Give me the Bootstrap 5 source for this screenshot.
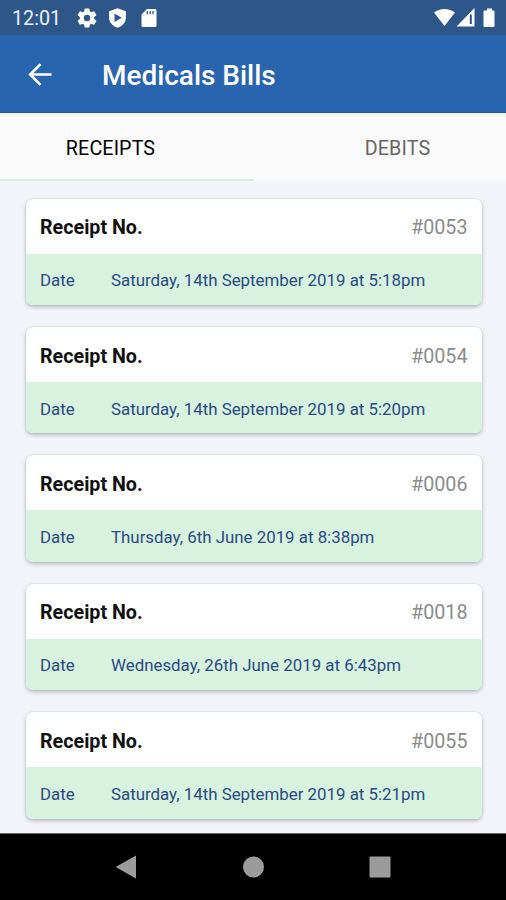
<!DOCTYPE html>
<html lang="en">
<head>
<meta charset="utf-8">
<meta name="viewport" content="width=device-width, initial-scale=1">
<title>Medicals Bills</title>
<link href="https://cdn.jsdelivr.net/npm/bootstrap@5.3.0/dist/css/bootstrap.min.css" rel="stylesheet">
<style>
body{font-family:Roboto,sans-serif;background:#f2f4f9;height:900px;line-height:1.2}
svg{display:block;flex:none}
.status-strip{height:35px;background:#2d5789;padding:0 9px 0 12px;color:#e9f1fb}
.clock{font-size:19.7px;width:65px;padding-top:2px}
.app-bar{height:78px;background:#2865ae;padding:2px 0 0 25px;border-bottom:1px solid #1c57a0}
.app-title{font-size:28px;font-weight:500;margin-left:47px;letter-spacing:-.03px;padding-top:2px}
.tab-strip{height:68px;background:#fafafa;box-shadow:inset 0 4px 4px -3px rgba(0,0,0,.07)}
.tab-strip .nav-link{font-size:19.7px;letter-spacing:.12px;color:#666;border-radius:0;border-bottom:2.5px solid transparent;padding:5px 0 0;height:68px}
.tab-strip .nav-link.active{color:#000;border-color:#d7f2df}
.tab-first{width:254px}
.tab-first .nav-link{padding-right:33px!important}
.tab-second .nav-link{padding-left:35px!important}
.bill-list{padding:17.5px 24.5px 0 26px;gap:21.9px;overflow:hidden}
.bill{border:0;border-radius:7px;height:106.5px;flex:none;box-shadow:0 2px 4px rgba(0,0,0,.24),0 0 2px rgba(0,0,0,.12);overflow:hidden}
.bill-head{height:55px;padding:4px 14px 0}
.bill-name{font-size:19.7px;font-weight:700;color:#111}
.bill-no{font-size:19.7px;color:#8b8b8b}
.bill-date{background:#d7f2df;padding:2px 14px 0;font-size:16.86px;color:#2b4a80}
.bill-label{width:71px}
.nav-strip{height:67px;background:#000;border-top:1px solid #666}
</style>
</head>
<body class="d-flex flex-column overflow-hidden">
<header>
  <div class="status-strip d-flex align-items-center">
    <span class="clock">12:01</span>
    <svg width="20" height="20" viewBox="2 2 20 20" fill="#fff"><path d="M19.14 12.94c.04-.3.06-.61.06-.94s-.02-.64-.07-.94l2.03-1.58a.49.49 0 0 0 .12-.61l-1.92-3.32a.49.49 0 0 0-.59-.22l-2.39.96c-.5-.38-1.03-.7-1.62-.94l-.36-2.54A.48.48 0 0 0 13.92 2.4h-3.84c-.24 0-.43.17-.47.41l-.36 2.54c-.59.24-1.13.57-1.62.94l-2.39-.96a.48.48 0 0 0-.59.22L2.74 8.87c-.12.21-.08.47.12.61l2.03 1.58c-.05.3-.09.63-.09.94s.02.64.07.94l-2.03 1.58a.49.49 0 0 0-.12.61l1.92 3.32c.12.22.37.29.59.22l2.39-.96c.5.38 1.03.7 1.62.94l.36 2.54c.05.24.24.41.48.41h3.84c.24 0 .44-.17.47-.41l.36-2.54c.59-.24 1.13-.56 1.62-.94l2.39.96c.22.08.47 0 .59-.22l1.92-3.32a.49.49 0 0 0-.12-.61zM12 15.2A3.2 3.2 0 1 1 12 8.800a3.200 3.200 0 0 1 0 6.400z"/></svg>
    <svg class="ms-2 me-2" width="28" height="20" viewBox="0 0 28 20"><path d="M12.500.3 4.100 3.300v6.200c0 4.800 3.400 8.800 8.400 10.200 5-1.400 8.400-5.400 8.400-10.200V3.300z" fill="#fff"/><path d="M9.500 5.400v8.600l7.200-4.300z" fill="#2d5789"/></svg>
    <svg width="16" height="20" viewBox="0 0 16 20"><path d="M6 1h8a1.500 1.500 0 0 1 1.500 1.500v15A1.500 1.500 0 0 1 14 19H2A1.500 1.500 0 0 1 .5 17.500V6.500z" fill="#fff"/><path d="M6.300 3v3.200M9.200 3v3.200M12 3v3.200" stroke="#2d5789" stroke-width="1.300"/></svg>
    <svg class="ms-auto" width="63" height="20" viewBox="0 0 63 20" fill="#fff"><path d="M0 4.500C3 2.200 6.500 1 10.500 1S18 2.200 21 4.500L10.500 18z"/><path d="M40.500 0v18.500H22.500z"/><path d="M36.800 6.500v9.500" stroke="#2d5789" stroke-width="2"/><path d="M53 .5h5v2h1.500a1 1 0 0 1 1 1v14.500a1 1 0 0 1-1 1h-9a1 1 0 0 1-1-1V3.500a1 1 0 0 1 1-1H53z"/></svg>
  </div>
  <div class="app-bar d-flex align-items-center">
    <svg width="30" height="30" viewBox="0 0 30 30" fill="none" stroke="#fff" stroke-width="2.600"><path d="M26.500 14.500H5.500M15.500 4.200 5.200 14.500l10.300 10.300"/></svg>
    <h1 class="app-title text-white mb-0">Medicals Bills</h1>
  </div>
</header>
<ul class="nav tab-strip flex-nowrap flex-shrink-0">
  <li class="tab-first"><a class="nav-link active d-flex align-items-center justify-content-center" href="#">RECEIPTS</a></li>
  <li class="tab-second flex-fill"><a class="nav-link d-flex align-items-center justify-content-center" href="#">DEBITS</a></li>
</ul>
<main class="bill-list d-flex flex-column flex-fill">
  <article class="card bill"><div class="bill-head d-flex align-items-center justify-content-between"><span class="bill-name">Receipt No.</span><span class="bill-no">#0053</span></div><div class="bill-date d-flex align-items-center flex-fill"><span class="bill-label">Date</span><span>Saturday, 14th September 2019 at 5:18pm</span></div></article>
  <article class="card bill"><div class="bill-head d-flex align-items-center justify-content-between"><span class="bill-name">Receipt No.</span><span class="bill-no">#0054</span></div><div class="bill-date d-flex align-items-center flex-fill"><span class="bill-label">Date</span><span>Saturday, 14th September 2019 at 5:20pm</span></div></article>
  <article class="card bill"><div class="bill-head d-flex align-items-center justify-content-between"><span class="bill-name">Receipt No.</span><span class="bill-no">#0006</span></div><div class="bill-date d-flex align-items-center flex-fill"><span class="bill-label">Date</span><span>Thursday, 6th June 2019 at 8:38pm</span></div></article>
  <article class="card bill"><div class="bill-head d-flex align-items-center justify-content-between"><span class="bill-name">Receipt No.</span><span class="bill-no">#0018</span></div><div class="bill-date d-flex align-items-center flex-fill"><span class="bill-label">Date</span><span>Wednesday, 26th June 2019 at 6:43pm</span></div></article>
  <article class="card bill"><div class="bill-head d-flex align-items-center justify-content-between"><span class="bill-name">Receipt No.</span><span class="bill-no">#0055</span></div><div class="bill-date d-flex align-items-center flex-fill"><span class="bill-label">Date</span><span>Saturday, 14th September 2019 at 5:21pm</span></div></article>
</main>
<footer class="nav-strip flex-shrink-0 d-flex justify-content-center align-items-center">
  <svg width="276" height="24" viewBox="0 0 276 24" fill="#9b9b9b"><path d="M21 .6v22.800L.6 12z"/><circle cx="138.500" cy="12" r="10.500"/><rect x="254.500" y="1.500" width="21" height="21" rx="1"/></svg>
</footer>
<script src="https://cdn.jsdelivr.net/npm/bootstrap@5.3.0/dist/js/bootstrap.bundle.min.js"></script>
</body>
</html>
